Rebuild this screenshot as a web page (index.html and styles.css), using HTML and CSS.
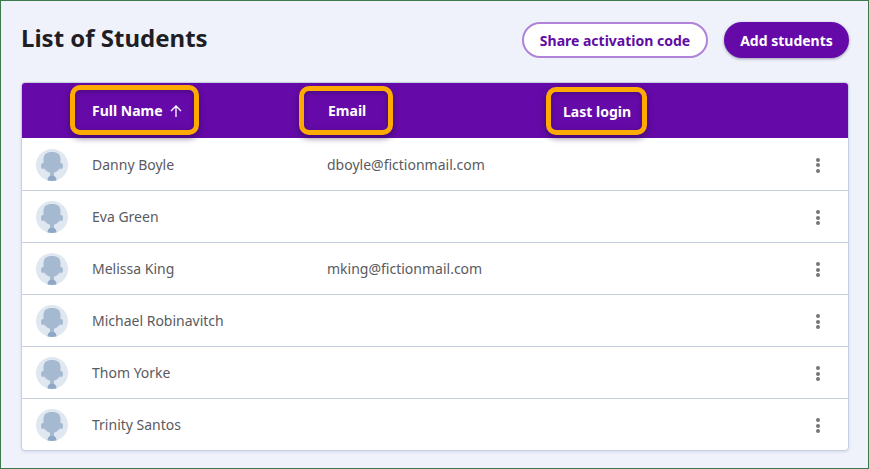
FILE: index.html
```html
<!DOCTYPE html>
<html lang="en">
<head>
<meta charset="utf-8">
<title>List of Students</title>
<link rel="stylesheet" href="styles.css">
</head>
<body>
<svg class="defs" aria-hidden="true">
  <symbol id="silhouette" viewBox="0 0 32 32">
    <circle cx="16" cy="16" r="16" fill="#dfe7f0"/>
    <ellipse cx="7" cy="17" rx="2" ry="3" fill="#a5bad1"/>
    <ellipse cx="25" cy="17" rx="2" ry="3" fill="#a5bad1"/>
    <path d="M7.500 10c0-4.500 3-7 8.500-7s8.500 2.500 8.500 7v6.500c0 3.500-4 7.500-8.500 7.500s-8.500-4-8.500-7.500z" fill="#a5bad1"/>
    <path d="M14 23h4v4h-4z" fill="#a5bad1"/>
    <path d="M11.500 31.600c0-2.600 1.500-4.600 3-4.600h3c1.500 0 3 2 3 4.600-1.500.3-3 .4-4.500.4s-3-.1-4.500-.4z" fill="#8fa8c6"/>
  </symbol>
</svg>
<main class="page">
  <header class="top">
    <h1 class="title">List of Students</h1>
    <div class="actions">
      <button class="btn btn-outline">Share activation code</button>
      <button class="btn btn-solid">Add students</button>
    </div>
  </header>
  <section class="table">
    <div class="thead">
      <div class="th th-name">Full Name
        <svg class="arrow" width="12" height="14" viewBox="0 0 12 14"><path d="M6 14V3M1 8l5-5 5 5" fill="none" stroke="#fff" stroke-width="1.300"/></svg>
      </div>
      <div class="th th-email">Email</div>
      <div class="th th-login">Last login</div>
    </div>
    <div class="row">
      <svg class="avatar"><use href="#silhouette"/></svg>
      <span class="name">Danny Boyle</span><span class="email">dboyle@fictionmail.com</span>
      <span class="kebab"><i></i><i></i><i></i></span>
    </div>
    <div class="row">
      <svg class="avatar"><use href="#silhouette"/></svg>
      <span class="name">Eva Green</span><span class="email"></span>
      <span class="kebab"><i></i><i></i><i></i></span>
    </div>
    <div class="row">
      <svg class="avatar"><use href="#silhouette"/></svg>
      <span class="name">Melissa King</span><span class="email">mking@fictionmail.com</span>
      <span class="kebab"><i></i><i></i><i></i></span>
    </div>
    <div class="row">
      <svg class="avatar"><use href="#silhouette"/></svg>
      <span class="name">Michael Robinavitch</span><span class="email"></span>
      <span class="kebab"><i></i><i></i><i></i></span>
    </div>
    <div class="row">
      <svg class="avatar"><use href="#silhouette"/></svg>
      <span class="name">Thom Yorke</span><span class="email"></span>
      <span class="kebab"><i></i><i></i><i></i></span>
    </div>
    <div class="row">
      <svg class="avatar"><use href="#silhouette"/></svg>
      <span class="name">Trinity Santos</span><span class="email"></span>
      <span class="kebab"><i></i><i></i><i></i></span>
    </div>
  </section>
</main>
</body>
</html>
```
FILE: styles.css
```css
* { box-sizing: border-box; }
html, body { margin: 0; height: 100%; }
body { font-family: "Noto Sans", sans-serif; overflow: hidden; }
.defs { display: none; }
.page {
  width: 869px;
  height: 469px;
  border: 1px solid #3b7a4b;
  background: #eff2fb;
  padding: 21px 19px 17px 20px;
}
.top {
  display: flex;
  align-items: center;
  justify-content: space-between;
  height: 36px;
  margin-bottom: 24px;
}
.title {
  margin: 0 0 4px;
  font-size: 24px;
  line-height: 32px;
  font-weight: 700;
  color: #1e1e24;
}
.actions { display: flex; gap: 16px; }
.btn {
  height: 36px;
  border-radius: 18px;
  font-family: inherit;
  font-size: 14px;
  font-weight: 700;
  padding: 0;
}
.btn-outline {
  width: 186px;
  background: #fff;
  color: #5f0ba5;
  border: 2px solid #ae83d8;
}
.btn-solid {
  width: 125px;
  background: #650aa8;
  color: #fff;
  border: 0;
  box-shadow: 0 1px 3px rgba(30, 20, 60, .4);
}
.table {
  height: 369px;
  border: 1px solid #c6d0e0;
  border-radius: 4px;
  background: #fff;
  box-shadow: 0 1px 3px rgba(120, 130, 170, .2);
  overflow: hidden;
}
.thead {
  display: flex;
  align-items: flex-end;
  height: 55px;
  background: #650aa8;
  padding: 0 0 3px 48px;
}
.th {
  display: flex;
  align-items: center;
  height: 49px;
  border: 5px solid #fdab00;
  border-radius: 10px;
  color: #fff;
  font-size: 14px;
  font-weight: 700;
  box-shadow: 0 3px 6px rgba(30, 10, 60, .55), inset 0 1px 5px rgba(30, 10, 60, .45);
}
.th-name { width: 129px; padding-left: 17px; height: 50px; }
.arrow { margin-left: 7px; }
.th-email { width: 94px; margin-left: 100px; padding-left: 24px; }
.th-login { width: 101px; margin-left: 153px; padding-left: 12px; height: 48px; }
.row {
  display: flex;
  align-items: center;
  height: 52px;
  padding-left: 14px;
  border-top: 1px solid #c6d0e0;
  font-size: 14px;
  color: #5a5a60;
}
.thead + .row { border-top: 0; }
.avatar {
  width: 32px;
  height: 32px;
  flex: none;
  align-self: flex-start;
  margin-top: 10px;
}
.thead + .row .avatar { margin-top: 11px; }
.name { width: 235px; margin-left: 24px; flex: none; }
.email { flex: 1; }
.kebab {
  display: flex;
  flex-direction: column;
  gap: 1.500px;
  margin: 2px 28px 0 0;
}
.kebab i { width: 4px; height: 4px; border-radius: 50%; background: #777; }
```
